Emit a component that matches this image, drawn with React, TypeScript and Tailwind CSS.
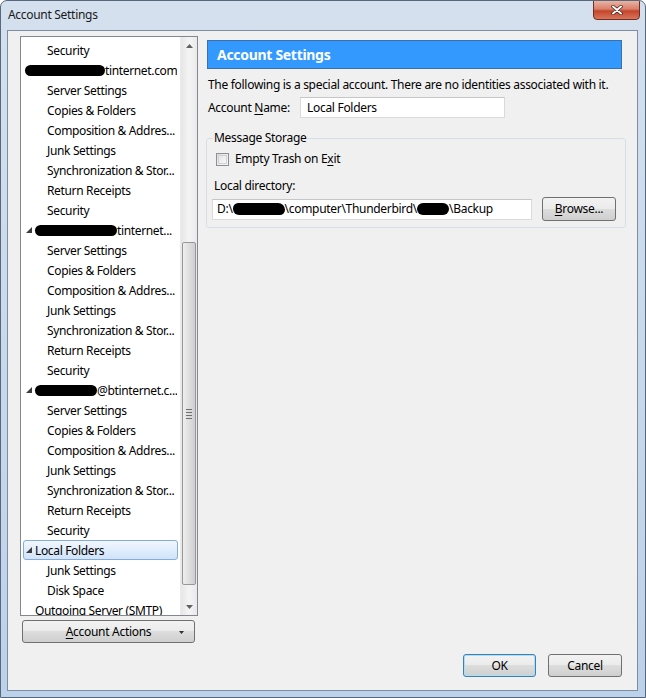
import React from "react";

type Row = {
  label: string;
  level: 0 | 1;
  arrow?: boolean;
  blob?: number;
  selected?: boolean;
};

const kids = [
  "Server Settings",
  "Copies & Folders",
  "Composition & Addres...",
  "Junk Settings",
  "Synchronization & Stor...",
  "Return Receipts",
  "Security",
];

const rows: Row[] = [
  { label: "Security", level: 1 },
  { label: "tinternet.com", level: 0, blob: 80 },
  ...kids.map((k) => ({ label: k, level: 1 as const })),
  { label: "tinternet...", level: 0, arrow: true, blob: 82 },
  ...kids.map((k) => ({ label: k, level: 1 as const })),
  { label: "@btinternet.c...", level: 0, arrow: true, blob: 62 },
  ...kids.map((k) => ({ label: k, level: 1 as const })),
  { label: "Local Folders", level: 0, arrow: true, selected: true },
  { label: "Junk Settings", level: 1 },
  { label: "Disk Space", level: 1 },
  { label: "Outgoing Server (SMTP)", level: 0 },
];

const btn =
  "border rounded-[3px] bg-[linear-gradient(to_bottom,#f2f2f2_0%,#ebebeb_50%,#dddddd_50%,#cfcfcf_100%)] flex items-center justify-center text-[12px] text-black";

const Expander = () => (
  <svg width="6" height="6" viewBox="0 0 6 6" className="shrink-0">
    <polygon points="6,0 6,6 0,6" fill="#3c3c3c" />
  </svg>
);

const Blob = ({ w }: { w: number }) => (
  <span
    className="inline-block h-[11px] bg-black rounded-full shrink-0"
    style={{ width: w }}
  />
);

const TreeRow = ({ r }: { r: Row }) => {
  return (
    <div
      className={`mx-[2px] h-[20px] flex items-center whitespace-nowrap overflow-hidden rounded-[3px] border tracking-[-0.35px] ${
        r.selected
          ? "border-[#84acdd] bg-linear-to-b from-[#f1f7fe] to-[#d0e3f9]"
          : "border-transparent"
      } ${r.level === 1 ? "pl-[23px]" : r.arrow ? "pl-[2px]" : r.blob ? "pl-[1px]" : "pl-[11px]"}`}
    >
      {r.arrow && (
        <span className="w-[9px] shrink-0 flex items-center">
          <Expander />
        </span>
      )}
      {r.blob && <Blob w={r.blob} />}
      <span className="pt-[2px]">{r.label}</span>
    </div>
  );
};

const ScrollArrow = ({ up }: { up?: boolean }) => (
  <div className="h-[17px] flex items-center justify-center shrink-0">
    <svg width="7" height="4" viewBox="0 0 7 4">
      <polygon points={up ? "3.5,0 7,4 0,4" : "0,0 7,0 3.5,4"} fill="#606060" />
    </svg>
  </div>
);

const ScrollBar = () => (
  <div className="w-[17px] shrink-0 flex flex-col bg-linear-to-r from-[#e6e6e6] via-[#f4f4f4] to-[#e9e9e9] border-l border-[#eaeaea]">
    <ScrollArrow up />
    <div className="flex-1 flex flex-col px-[1px]">
      <div className="mt-[188px] h-[343px] rounded-[2px] border border-[#979797] bg-linear-to-r from-[#eeeeee] via-[#dedede] to-[#cfcfcf] flex items-center justify-center">
        <div className="flex flex-col gap-[2px]">
          <div className="w-[6px] h-[1px] bg-[#6e6e6e]" />
          <div className="w-[6px] h-[1px] bg-[#6e6e6e]" />
          <div className="w-[6px] h-[1px] bg-[#6e6e6e]" />
          <div className="w-[6px] h-[1px] bg-[#6e6e6e]" />
        </div>
      </div>
    </div>
    <ScrollArrow />
  </div>
);

const U = ({ c }: { c: string }) => <span className="underline underline-offset-2">{c}</span>;

export default function App() {
  return (
    <div className="w-[646px] h-[698px] overflow-hidden rounded-t-[7px] border border-[#57687d] bg-linear-to-b from-[#d4e0ee] via-[#c9d9ec] to-[#bcd1ea] flex flex-col font-['Noto_Sans',sans-serif] text-[12px] text-black tracking-[-0.3px]">
      {/* title bar */}
      <div className="h-[29px] shrink-0 flex items-start justify-between">
        <div className="pl-[7px] pt-[6px] leading-[16px] text-[12px] text-[#1a1a1a]">Account Settings</div>
        <div className="mr-[5px] -mt-[1px] w-[47px] h-[20px] rounded-b-[4px] border border-[#6e2e22] bg-[linear-gradient(to_bottom,#eab3a4_0%,#d97f6a_45%,#c4442a_55%,#d9765c_100%)] flex items-center justify-center">
          <svg width="12" height="10" viewBox="0 0 12 10">
            <path d="M2 1.5 L10 8.5 M10 1.5 L2 8.5" stroke="#3a1a14" strokeWidth="3.4" strokeLinecap="round" />
            <path d="M2 1.5 L10 8.5 M10 1.5 L2 8.5" stroke="#ffffff" strokeWidth="2" strokeLinecap="round" />
          </svg>
        </div>
      </div>

      {/* client area */}
      <div className="ml-[6px] w-[631px] h-[661px] shrink-0 border border-[#7d8ea3] bg-[#f0f0f0] flex flex-col">
        <div className="flex-1 flex">
          {/* left column */}
          <div className="pl-[12px] pt-[5px] w-[190px] shrink-0 flex flex-col">
            <div className="h-[580px] border border-[#828790] bg-white flex">
              <div className="flex-1 overflow-hidden pt-[3px] min-w-0">
                {rows.map((r, i) => (
                  <TreeRow key={i} r={r} />
                ))}
              </div>
              <ScrollBar />
            </div>
            <div className={`mt-[4px] ml-[2px] w-[173px] h-[23px] border-[#707070] relative ${btn}`}>
              <span>
                <U c="A" />ccount Actions
              </span>
              <svg width="5" height="3" viewBox="0 0 5 3" className="absolute right-[10px] top-[10px]">
                <polygon points="0,0 5,0 2.5,3" fill="#303030" />
              </svg>
            </div>
          </div>

          {/* right column */}
          <div className="ml-[8px] pt-[9px] w-[420px] flex flex-col">
            <div className="ml-[1px] w-[415px] h-[29px] bg-[#3399ff] border border-[#3f6fa8] flex items-center pl-[9px] text-white font-bold text-[14px]">
              Account Settings
            </div>
            <div className="mt-[8px] pl-[2px] leading-[16px] whitespace-nowrap">
              The following is a special account. There are no identities associated with it.
            </div>
            <div className="mt-[4px] pl-[2px] flex items-center h-[21px]">
              <span className="w-[92px]">
                Account <U c="N" />ame:
              </span>
              <div className="w-[205px] h-[21px] bg-white border border-[#dadada] border-t-[#c6c6c6] flex items-center pl-[6px]">
                Local Folders
              </div>
            </div>

            <fieldset className="mt-[12px] w-[420px] border border-[#d5dfe5] rounded-[3px] px-[5px] pb-[6px]">
              <legend className="ml-[1px] px-[1px] leading-[16px]">Message Storage</legend>
              <div className="mt-[5px] h-[16px] ml-[4px] flex items-center">
                <div className="w-[13px] h-[13px] border border-[#8f8f8f] bg-linear-to-br from-[#dcdcdc] to-[#fbfbfb] flex items-center justify-center">
                  <div className="w-[9px] h-[9px] border border-[#cfd3d8] bg-linear-to-br from-[#e4e4e4] to-[#f8f8f8]" />
                </div>
                <span className="ml-[6px]">
                  Empty Trash on E<U c="x" />it
                </span>
              </div>
              <div className="mt-[11px] ml-[2px] h-[16px] leading-[16px]">Local directory:</div>
              <div className="mt-[3px] h-[24px] flex items-center">
                <div className="w-[320px] h-[21px] bg-white border border-[#dadada] border-t-[#c6c6c6] flex items-center pl-[4px] whitespace-nowrap overflow-hidden">
                  <span>D:\</span>
                  <span className="inline-block w-[52px] h-[12px] bg-black rounded-[6px_8px_6px_7px] shrink-0" />
                  <span>\computer\Thunderbird\</span>
                  <span className="inline-block w-[32px] h-[12px] bg-black rounded-full shrink-0" />
                  <span>\Backup</span>
                </div>
                <div className={`ml-[10px] w-[74px] h-[24px] border-[#707070] ${btn}`}>
                  <span>
                    <U c="B" />rowse...
                  </span>
                </div>
              </div>
            </fieldset>
          </div>
        </div>

        {/* bottom buttons */}
        <div className="flex justify-end gap-[12px] pr-[15px] pb-[13px]">
          <div className={`w-[73px] h-[23px] border-[#3c7fb1] shadow-[inset_0_0_0_1px_#a8e0f7] ${btn}`}>OK</div>
          <div className={`w-[74px] h-[23px] border-[#707070] ${btn}`}>Cancel</div>
        </div>
      </div>
    </div>
  );
}
